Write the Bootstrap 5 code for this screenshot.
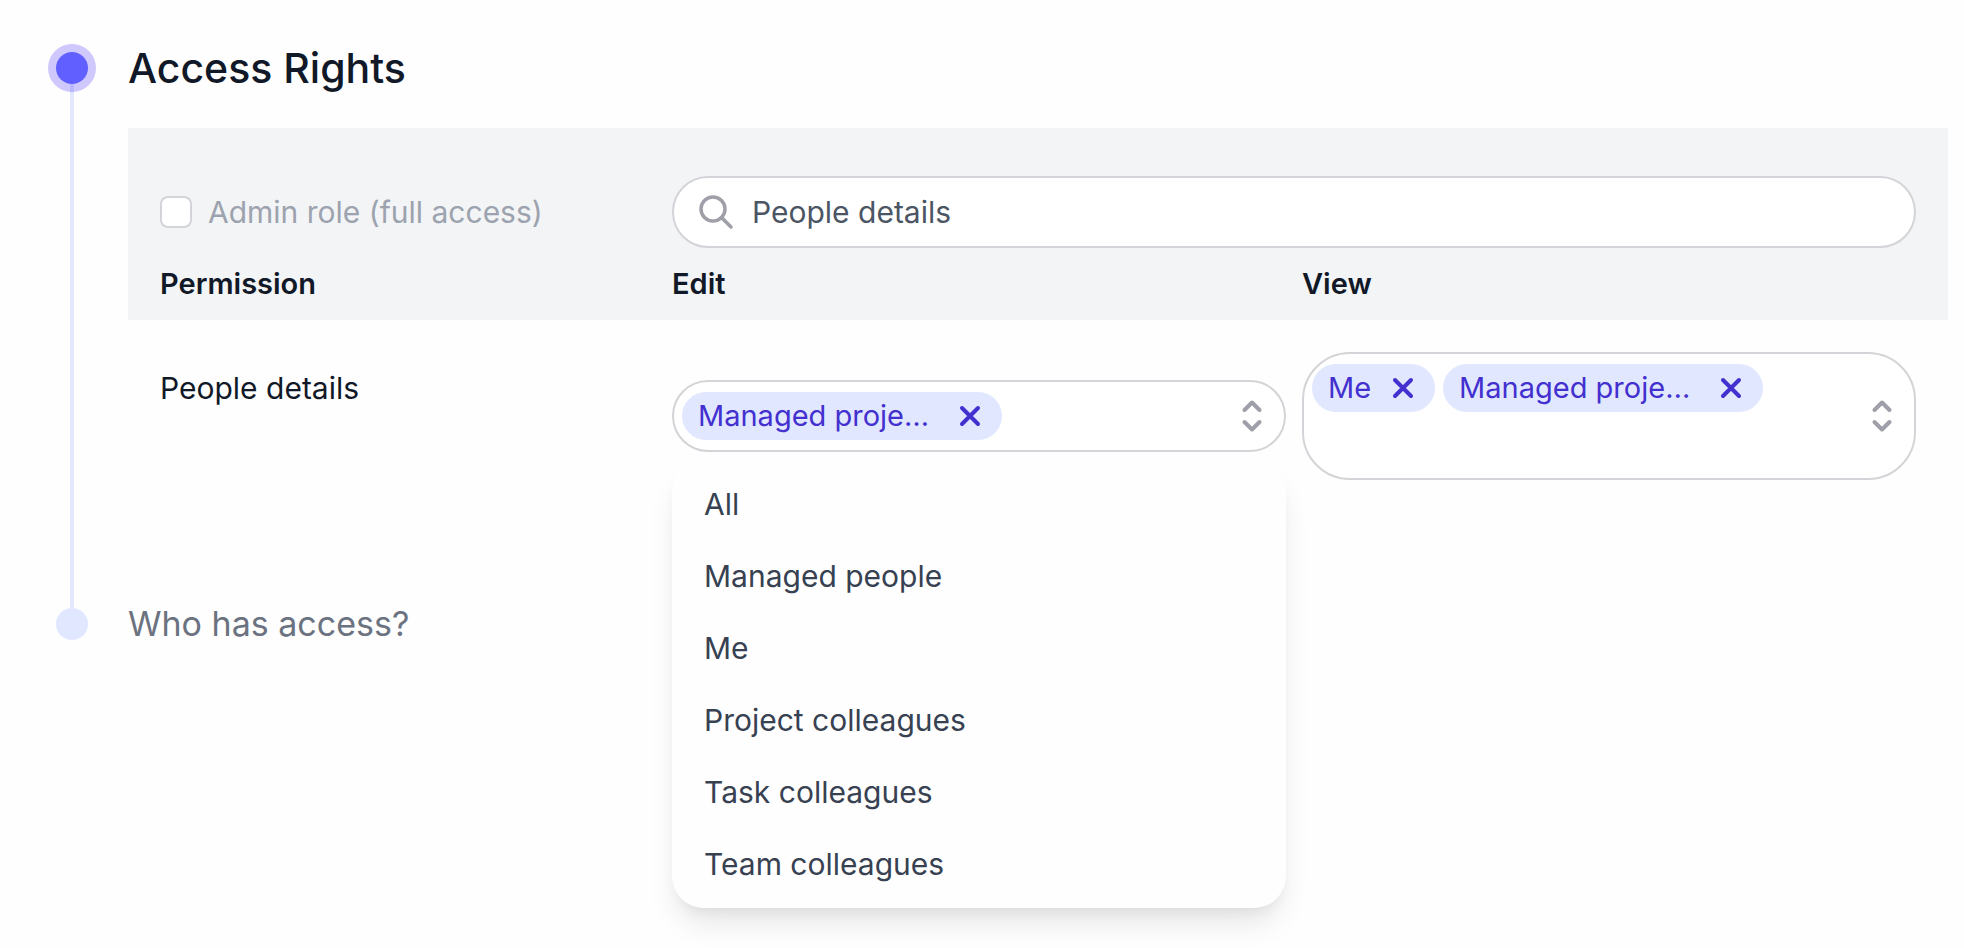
<!DOCTYPE html>
<html lang="en">
<head>
<meta charset="utf-8">
<meta name="viewport" content="width=device-width, initial-scale=1">
<title>Access Rights</title>
<link href="https://cdn.jsdelivr.net/npm/bootstrap@5.3.0/dist/css/bootstrap.min.css" rel="stylesheet">
<style>
  :root { --ink: #111827; --line: #d4d4d8; --tint: #e0e7ff; --brand: #4330cf; }
  body { font-family: Inter, "Open Sans", sans-serif; font-size: 30px; line-height: 40px; color: var(--ink); background: #fefefe; }
  .page { min-height: 100vh; padding: 44px 16px 40px 48px; }
  .step { display: flex; gap: 32px; }
  .rail { width: 48px; display: flex; flex-direction: column; align-items: center; flex: none; }
  .dot { width: 48px; height: 48px; border-radius: 50%; display: grid; place-items: center; position: relative; z-index: 1; }
  .dot::before { content: ""; width: 32px; height: 32px; border-radius: 50%; background: var(--tint); }
  .dot.current { background: rgba(79, 57, 246, .27); }
  .dot.current::before { background: #615fff; }
  .rail-line { width: 4px; flex: 1; margin: -8px 0; background: var(--tint); }
  .step-title { font-size: 41px; line-height: 48px; font-weight: 500; margin: 0 0 36px; }
  .step-next { font-size: 34px; line-height: 48px; font-weight: 400; margin: 0; color: #6b7280; }
  .perm-grid { display: grid; grid-template-columns: 496px minmax(0, 1fr) minmax(0, 1fr); column-gap: 16px; padding: 0 32px; }
  .perm-head { background: #f3f4f6; padding-top: 48px; padding-bottom: 16px; row-gap: 16px; }
  .perm-head h3 { font-size: 29px; line-height: 40px; font-weight: 600; margin: 0; }
  .perm-body { padding-top: 32px; padding-bottom: 120px; }
  .admin-check { color: #9ca3af; gap: 16px; }
  .admin-check .form-check-input { width: 32px; height: 32px; margin: 0; border: 2px solid #d4d4d8; border-radius: 8px; background-color: #fff; float: none; }
  .admin-check .form-check-input:disabled, .admin-check .form-check-input:disabled ~ label { opacity: 1; }
  .search-box { grid-column: 2 / 4; height: 72px; border: 2px solid var(--line); border-radius: 36px; background: #fff; padding: 0 24px; gap: 14px; }
  .search-box input { font-size: 30px; line-height: 40px; color: #4b5563; padding: 0; }
  .perm-name { padding-top: 16px; }
  .picker { position: relative; border: 2px solid var(--line); border-radius: 48px; padding: 10px 8px; min-height: 72px; background: #fff; }
  .picker.tall { min-height: 128px; }
  .chips { display: flex; flex-wrap: wrap; gap: 8px; padding-right: 60px; }
  .chip { display: flex; align-items: center; height: 48px; border-radius: 24px; padding: 0 16px; background: var(--tint); color: var(--brand); font-size: 29px; }
  .chip-text.clipped { width: 240px; }
  .chip button { width: 32px; height: 32px; margin-left: 16px; }
  .plain { border: 0; background: none; padding: 0; color: inherit; display: block; line-height: 0; }
  .toggle { position: absolute; right: 16px; top: 50%; transform: translateY(-50%); color: #9f9fa9; }
  .picker-menu { position: absolute; left: -2px; right: -2px; top: calc(100% + 10px); display: block; padding: 8px 0; border: 0; border-radius: 32px; background: #fefefe; font-size: 30px; box-shadow: 0 20px 30px -6px rgba(0,0,0,.1), 0 8px 12px -4px rgba(0,0,0,.05); }
  .picker-menu .dropdown-item { padding: 16px 32px; line-height: 40px; color: #374151; }
</style>
</head>
<body>
<main class="page">
  <ol class="list-unstyled m-0">
    <li class="step">
      <div class="rail"><span class="dot current"></span><span class="rail-line"></span></div>
      <section class="flex-fill">
        <h2 class="step-title">Access Rights</h2>
        <div class="perm-grid perm-head">
          <div class="admin-check d-flex align-items-center">
            <input class="form-check-input" type="checkbox" id="admin" disabled>
            <label for="admin">Admin role (full access)</label>
          </div>
          <div class="search-box d-flex align-items-center">
            <svg class="flex-shrink-0" width="40" height="40" viewBox="0 0 40 40" fill="none" stroke="#9f9fa9" stroke-width="3.500" stroke-linecap="round" aria-hidden="true"><circle cx="15" cy="17" r="12"/><path d="M23.500 25.500l9.500 9.500"/></svg>
            <input class="form-control border-0 shadow-none bg-transparent" type="text" aria-label="Search permissions" value="People details">
          </div>
          <h3>Permission</h3>
          <h3>Edit</h3>
          <h3>View</h3>
        </div>
        <div class="perm-grid perm-body">
          <div class="perm-name">People details</div>
          <div class="picker align-self-center">
            <div class="chips">
              <span class="chip"><span class="chip-text clipped">Managed proje…</span>
                <button class="plain" type="button" aria-label="Remove Managed projects"><svg width="32" height="32" viewBox="0 0 32 32" fill="none" stroke="currentColor" stroke-width="4" stroke-linecap="round"><path d="M8 8l16 16M24 8L8 24"/></svg></button></span>
            </div>
            <button class="plain toggle" type="button" aria-label="Toggle edit options" aria-expanded="true"><svg width="32" height="40" viewBox="0 0 32 40" fill="none" stroke="currentColor" stroke-width="4" stroke-linecap="round" stroke-linejoin="round"><path d="M8.500 14L16 6.500l7.500 7.500M8.500 26l7.500 7.500 7.500-7.500"/></svg></button>
            <div class="dropdown-menu picker-menu">
              <button class="dropdown-item" type="button">All</button>
              <button class="dropdown-item" type="button">Managed people</button>
              <button class="dropdown-item" type="button">Me</button>
              <button class="dropdown-item" type="button">Project colleagues</button>
              <button class="dropdown-item" type="button">Task colleagues</button>
              <button class="dropdown-item" type="button">Team colleagues</button>
            </div>
          </div>
          <div class="picker tall">
            <div class="chips">
              <span class="chip"><span class="chip-text">Me</span>
                <button class="plain" type="button" aria-label="Remove Me"><svg width="32" height="32" viewBox="0 0 32 32" fill="none" stroke="currentColor" stroke-width="4" stroke-linecap="round"><path d="M8 8l16 16M24 8L8 24"/></svg></button></span>
              <span class="chip"><span class="chip-text clipped">Managed proje…</span>
                <button class="plain" type="button" aria-label="Remove Managed projects"><svg width="32" height="32" viewBox="0 0 32 32" fill="none" stroke="currentColor" stroke-width="4" stroke-linecap="round"><path d="M8 8l16 16M24 8L8 24"/></svg></button></span>
            </div>
            <button class="plain toggle" type="button" aria-label="Toggle view options" aria-expanded="false"><svg width="32" height="40" viewBox="0 0 32 40" fill="none" stroke="currentColor" stroke-width="4" stroke-linecap="round" stroke-linejoin="round"><path d="M8.500 14L16 6.500l7.500 7.500M8.500 26l7.500 7.500 7.500-7.500"/></svg></button>
          </div>
        </div>
      </section>
    </li>
    <li class="step">
      <div class="rail"><span class="dot"></span></div>
      <h2 class="step-next">Who has access?</h2>
    </li>
  </ol>
</main>
<script src="https://cdn.jsdelivr.net/npm/bootstrap@5.3.0/dist/js/bootstrap.bundle.min.js"></script>
</body>
</html>
